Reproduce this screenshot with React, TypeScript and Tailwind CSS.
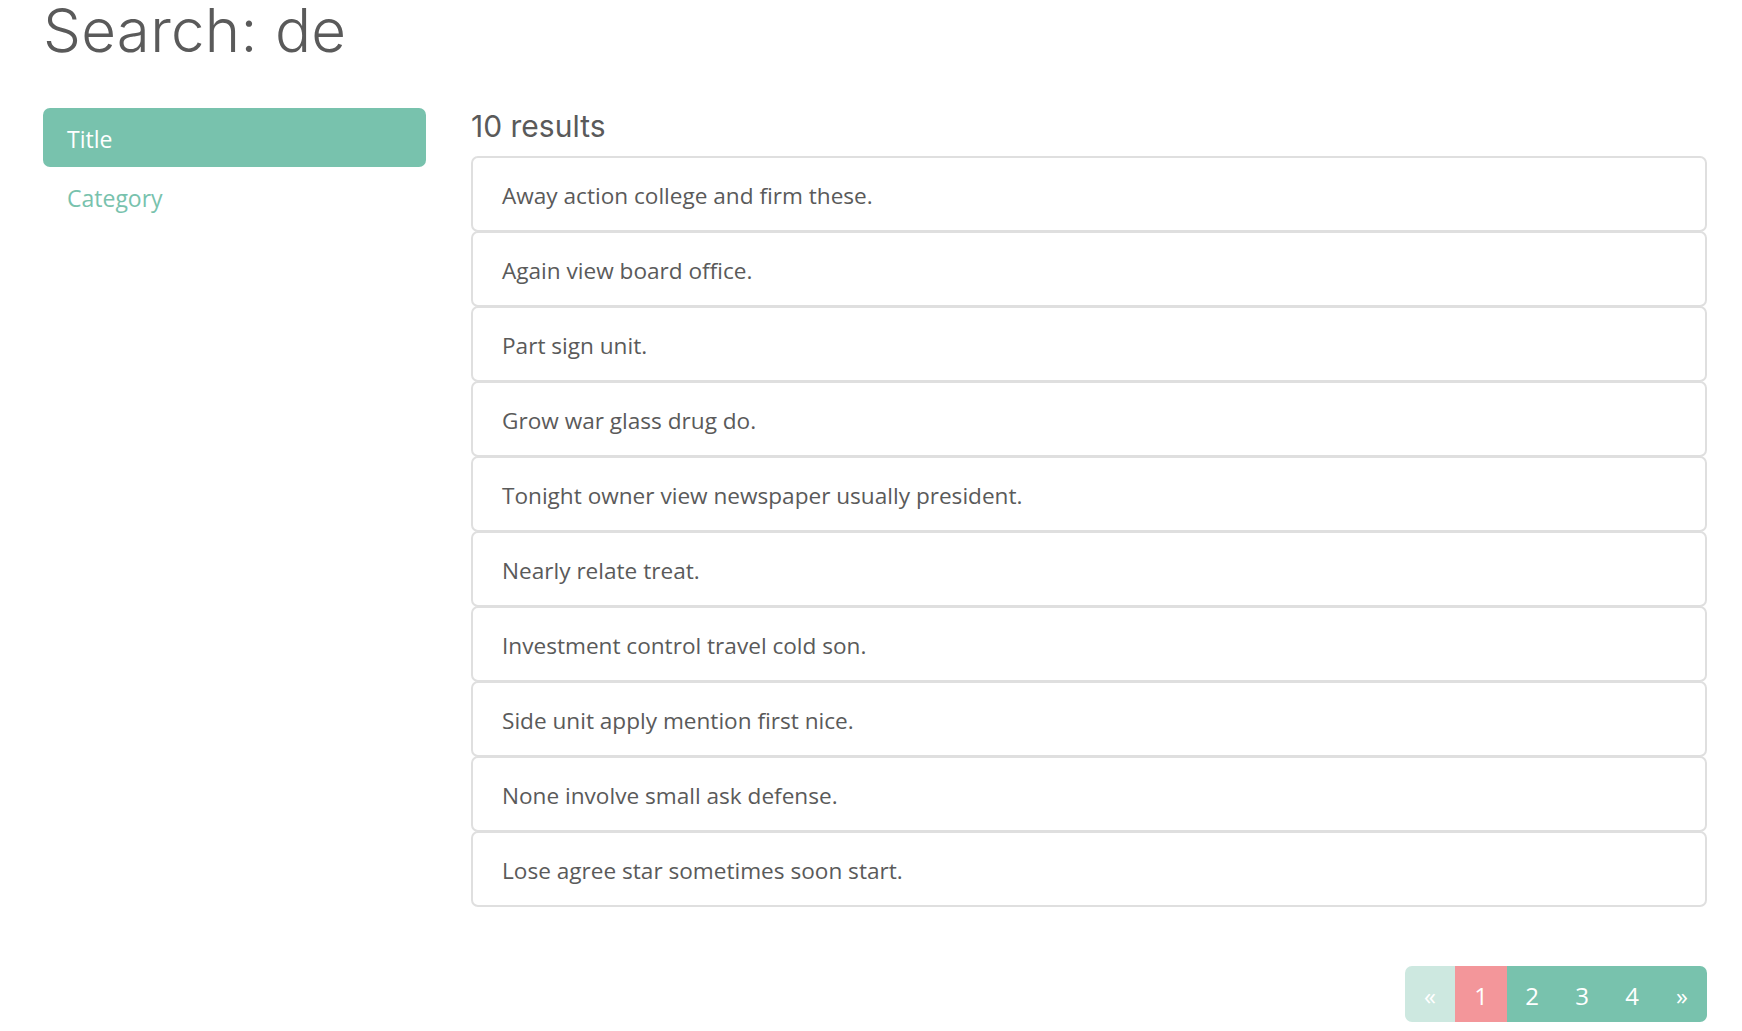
const results = [
  "Away action college and firm these.",
  "Again view board office.",
  "Part sign unit.",
  "Grow war glass drug do.",
  "Tonight owner view newspaper usually president.",
  "Nearly relate treat.",
  "Investment control travel cold son.",
  "Side unit apply mention first nice.",
  "None involve small ask defense.",
  "Lose agree star sometimes soon start.",
];

const pages = ["«", "1", "2", "3", "4", "»"];

export default function App() {
  return (
    <div className="min-h-screen bg-white pl-[43px] pr-[35px] text-[#5a5a5a] font-['Open_Sans',sans-serif] overflow-hidden">
      <h1 className="-mt-[6px] text-[60px] leading-[72px] font-['Inter',sans-serif] font-light tracking-[0.3px] text-[#5a5a5a]">
        Search: de
      </h1>

      <div className="mt-[42px] flex gap-[45px]">
        {/* Sidebar */}
        <nav className="w-[383px] shrink-0 flex flex-col">
          <a className="h-[59px] pt-[3px] flex items-center px-[24px] rounded-[7px] bg-[#78c2ad] text-white text-[23px]">
            Title
          </a>
          <a className="h-[59px] pt-[4px] flex items-center px-[24px] text-[#78c2ad] text-[23px]">Category</a>
        </nav>

        {/* Results */}
        <main className="flex-1 min-w-0">
          <h4 className="text-[30px] leading-[36px] font-['Inter',sans-serif] font-normal text-[#5a5a5a] mb-[12px]">
            10 results
          </h4>
          <div className="flex flex-col">
            {results.map((r, i) => (
              <div
                key={i}
                className={`h-[76px] pt-[3px] flex items-center px-[29px] border-2 border-[#dfdfdf] rounded-[7px] bg-white text-[22.6px] ${i > 0 ? "-mt-px" : ""}`}
              >
                {r}
              </div>
            ))}
          </div>

          <div className="mt-[59px] flex justify-end">
            <div className="flex h-[56px] pt-[2px] rounded-[7px] overflow-hidden text-white text-[24px]">
              {pages.map((p, i) => (
                <span
                  key={p}
                  className={
                    i === 0
                      ? "w-[50px] -mt-[2px] flex items-center justify-center bg-[#cde8e0]"
                      : i === 1
                      ? "w-[52px] -mt-[2px] flex items-center justify-center bg-[#f3969a]"
                      : "w-[50px] -mt-[2px] flex items-center justify-center bg-[#78c2ad]"
                  }
                >
                  <span className="pt-[4px]">{p}</span>
                </span>
              ))}
            </div>
          </div>
        </main>
      </div>
    </div>
  );
}
